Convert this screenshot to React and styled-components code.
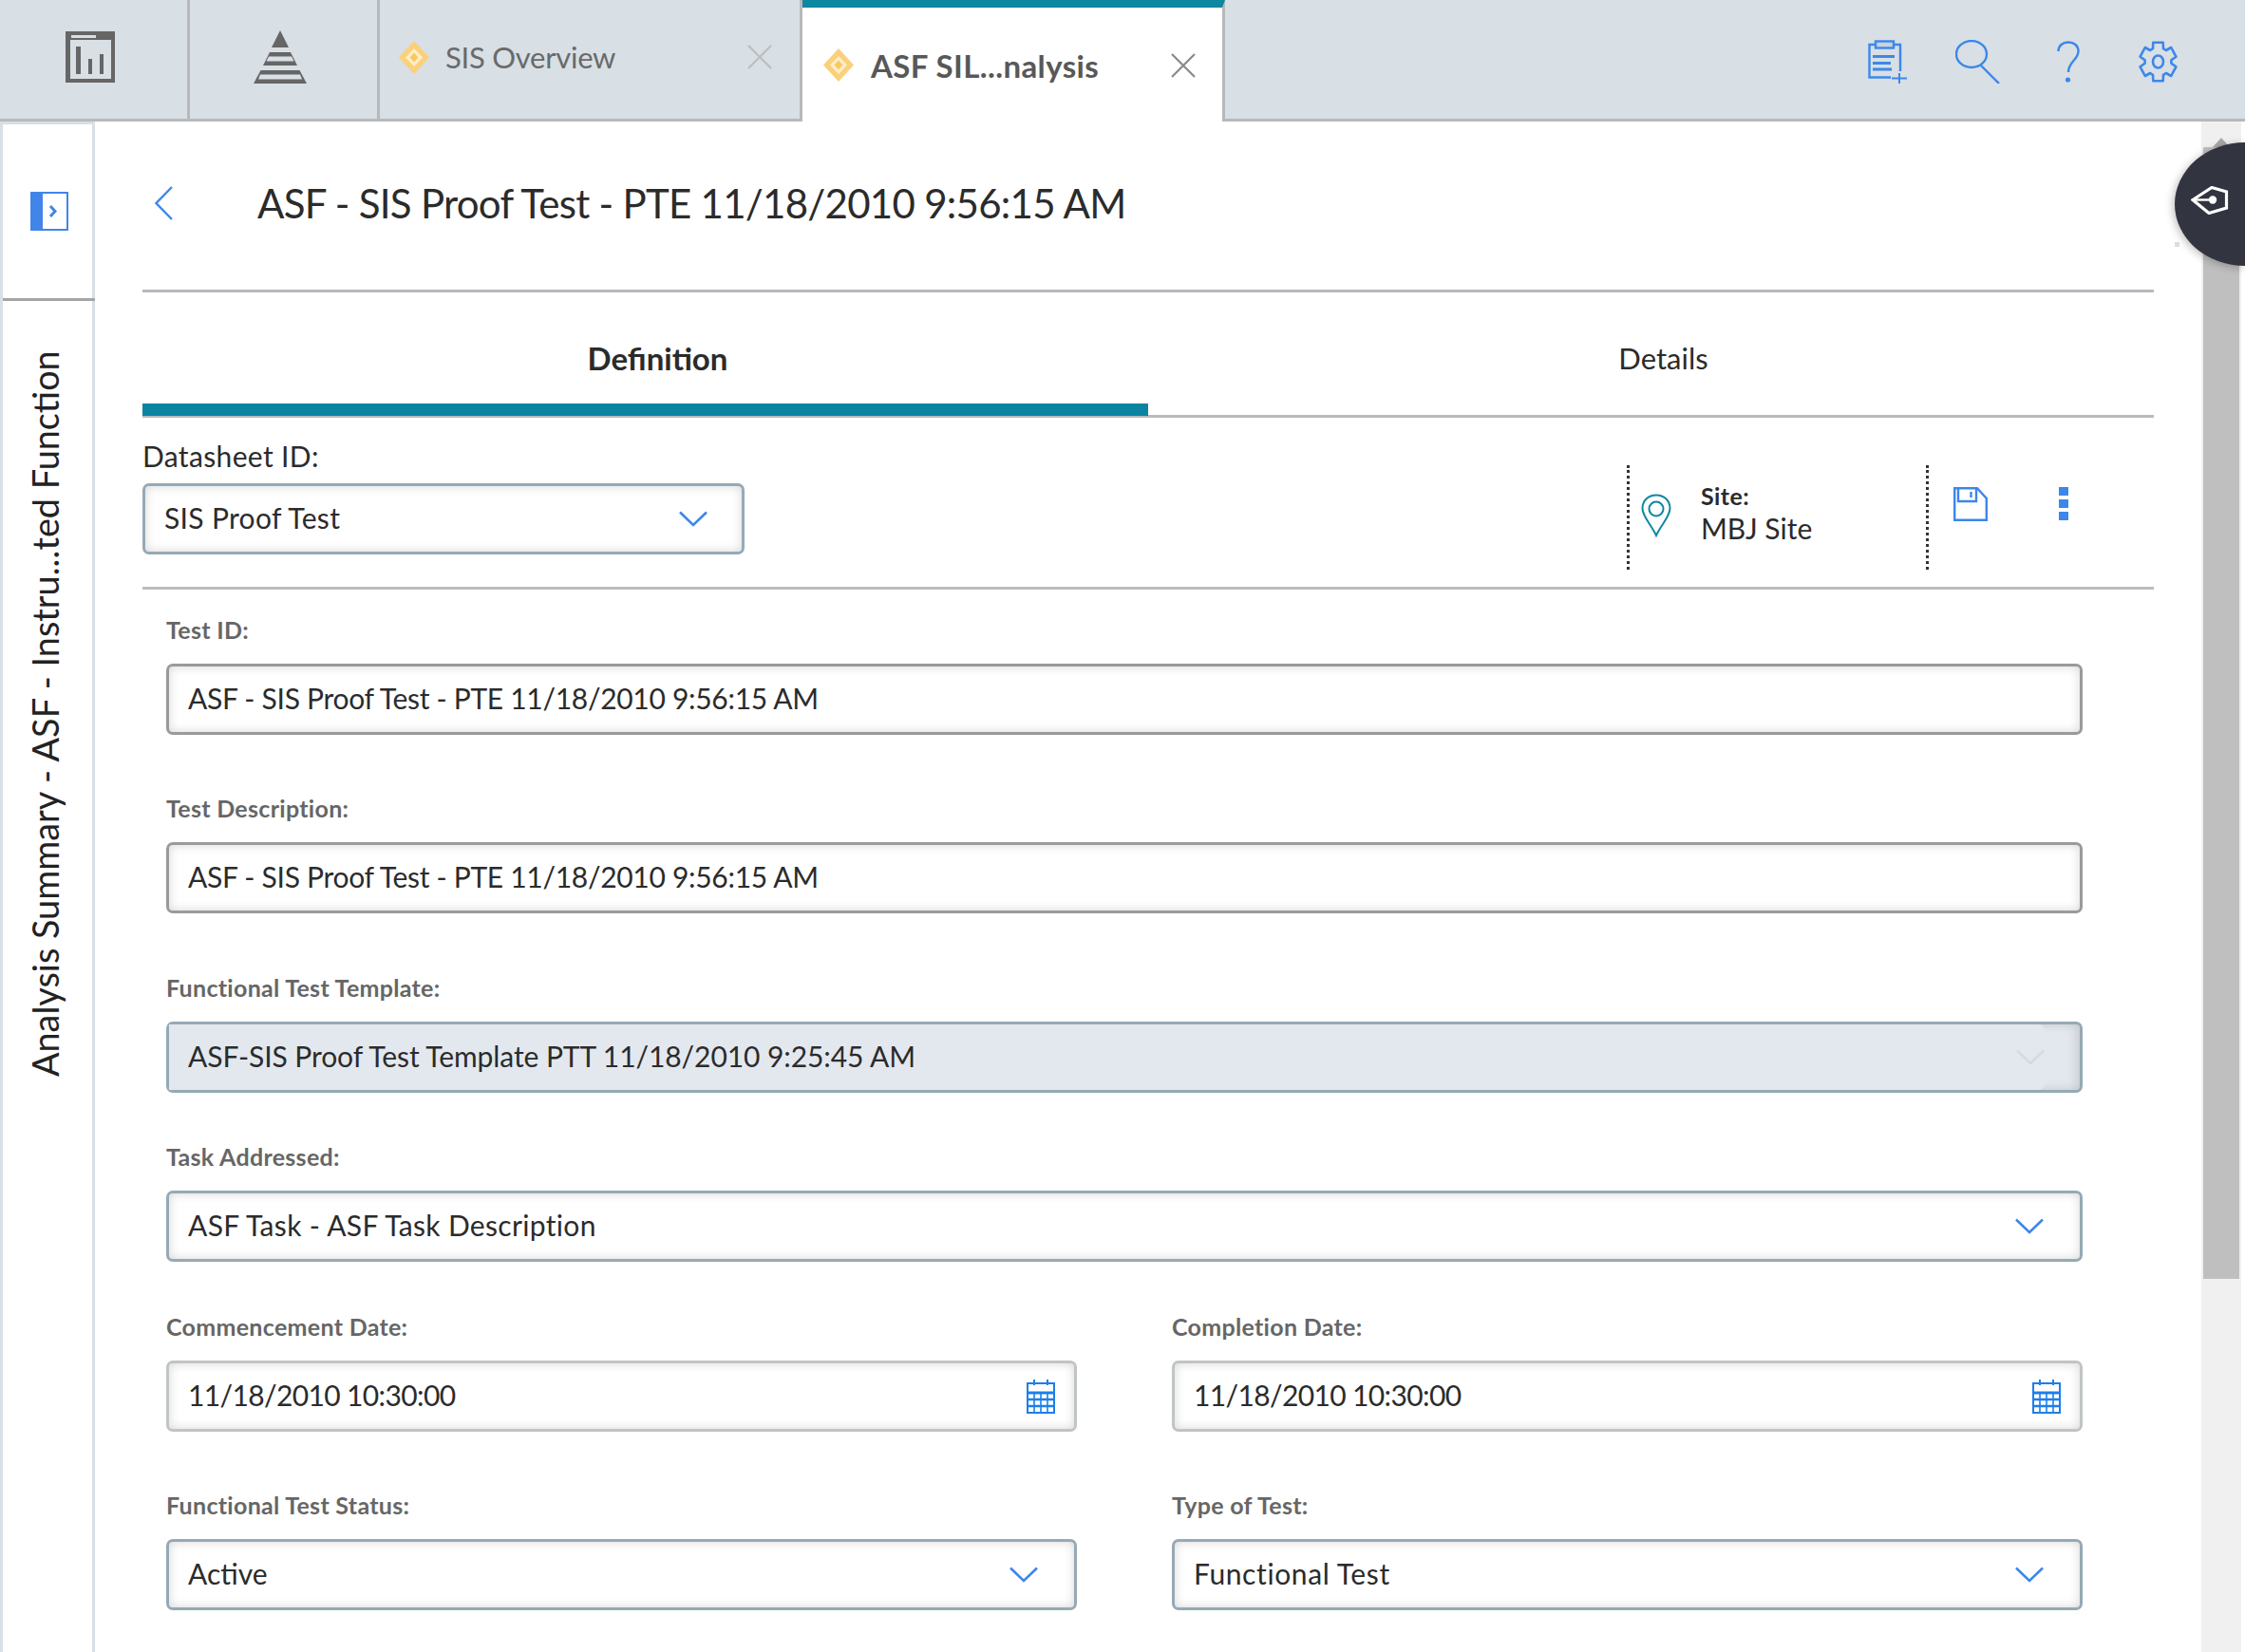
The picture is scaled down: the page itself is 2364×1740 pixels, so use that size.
import React from "react";
import styled, { createGlobalStyle } from "styled-components";

const Global = createGlobalStyle`
  html, body { margin: 0; padding: 0; background: #fff; }
  * { box-sizing: border-box; }
  body { font-family: Lato, "Liberation Sans", sans-serif; color: #2b2b2b; }
`;

const BLUE = "#3d87ea";
const TEAL = "#0e87a0";

const Page = styled.div`
  position: relative;
  width: 2364px;
  height: 1740px;
  overflow: hidden;
  display: flex;
  flex-direction: column;
  background: #fff;
`;

const TopBar = styled.header`
  flex: none;
  height: 128px;
  display: flex;
  background: #d8dfe5;
  border-bottom: 3px solid #b8b8bc;
`;

const ModuleTab = styled.div`
  flex: none;
  width: ${(p) => p.$w}px;
  display: flex;
  align-items: center;
  justify-content: center;
  padding: 0 8px 5px 0;
  border-right: 3px solid #b8b8bc;
`;

const DocTab = styled.div`
  flex: none;
  width: ${(p) => p.$w}px;
  display: flex;
  align-items: center;
  height: ${(p) => (p.$active ? "128px" : "125px")};
  padding: ${(p) => (p.$active ? "1px 0 0 21px" : "0 0 5px 19px")};
  background: ${(p) => (p.$active ? "#fff" : "transparent")};
  border-right: 3px solid #b8b8bc;
  border-top: ${(p) => (p.$active ? `8px solid ${TEAL}` : "none")};
`;

const TabTitle = styled.span`
  margin-left: ${(p) => (p.$active ? "17px" : "16px")};
  width: ${(p) => (p.$active ? "316px" : "318px")};
  font-size: ${(p) => (p.$active ? "33px" : "31px")};
  letter-spacing: ${(p) => (p.$active ? "0.4px" : "-0.25px")};
  font-weight: ${(p) => (p.$active ? 700 : 400)};
  color: ${(p) => (p.$active ? "#585858" : "#6a6a6a")};
  white-space: nowrap;
`;

const ToolGroup = styled.div`
  margin-left: auto;
  display: flex;
  align-items: center;
  padding: 0 44px 0 0;
`;

const ToolCell = styled.div`
  width: 95px;
  display: flex;
  justify-content: center;
  padding-top: 4px;
`;

const Body = styled.div`
  flex: 1;
  min-height: 0;
  display: flex;
`;

const Sidebar = styled.aside`
  flex: none;
  width: 100px;
  display: flex;
  flex-direction: column;
  border-left: 3px solid #d8dfe5;
  border-right: 3px solid #d8dfe5;
  border-top: 3px solid #d8dfe5;
`;

const SideHead = styled.div`
  flex: none;
  height: 186px;
  padding: 71px 0 0 29px;
  margin-right: -3px;
  border-bottom: 3px solid #a5a5a8;
`;

const SideTitle = styled.div`
  margin: 52px 0 0 23px;
  writing-mode: vertical-rl;
  transform: rotate(180deg);
  font-size: 37.8px;
  line-height: 44px;
  height: 765px;
  white-space: nowrap;
  color: #222;
`;

const Main = styled.main`
  flex: 1;
  min-width: 0;
  padding: 0 50px;
`;

const TitleRow = styled.div`
  height: 180px;
  display: flex;
  align-items: center;
  padding: 0 0 5px 13px;
  border-bottom: 3px solid #b9b9be;
`;

const Title = styled.h1`
  margin: 0 0 0 89px;
  font-size: 42px;
  letter-spacing: -0.73px;
  font-weight: 400;
  color: #2b2b2b;
  white-space: nowrap;
`;

const Tabs = styled.div`
  height: 132px;
  display: flex;
  border-bottom: 3px solid #b9b9be;
`;

const TabItem = styled.div`
  flex: 1;
  display: flex;
  justify-content: center;
  align-items: flex-start;
  padding: 51px 0 0 26px;
  height: 130px;
  font-size: ${(p) => (p.$active ? "33px" : "31px")};
  line-height: 36px;
  font-weight: ${(p) => (p.$active ? 700 : 400)};
  color: #2b2b2b;
  border-bottom: ${(p) => (p.$active ? `13px solid #0b84a2` : "none")};
`;

const SheetBar = styled.div`
  height: 181px;
  display: flex;
  justify-content: space-between;
  border-bottom: 3px solid #bcbcc0;
  padding-top: 24px;
`;

const SheetLeft = styled.div`
  width: 634px;
`;

const SheetLabel = styled.div`
  height: 34px;
  margin-bottom: 11px;
  font-size: 30px;
  letter-spacing: 0.35px;
  line-height: 32px;
  color: #2b2b2b;
`;

const SheetRight = styled.div`
  width: 555px;
  display: flex;
  padding-top: 26px;
  height: 136px;
`;

const SiteCell = styled.div`
  width: 315px;
  height: 110px;
  display: flex;
  border-left: 3px dotted #333;
  padding: 30px 0 0 12px;
`;

const SiteText = styled.div`
  margin: -12px 0 0 31px;
`;

const SiteLabel = styled.div`
  font-size: 25px;
  letter-spacing: 0.4px;
  line-height: 28px;
  font-weight: 700;
  color: #2b2b2b;
`;

const SiteValue = styled.div`
  margin-top: 2px;
  font-size: 30px;
  line-height: 36px;
  color: #2b2b2b;
`;

const ActionCell = styled.div`
  flex: 1;
  height: 110px;
  display: flex;
  border-left: 3px dotted #333;
  padding: 23px 0 0 26px;
`;

const Dots = styled.div`
  margin-left: 75px;
  display: flex;
  flex-direction: column;
  gap: 4px;
`;

const Dot = styled.span`
  display: block;
  width: 10px;
  height: 9px;
  background: ${BLUE};
`;

const Form = styled.div`
  padding: 27px 75px 0 25px;
`;

const Field = styled.div`
  margin-top: ${(p) => p.$top || 0}px;
`;

const FieldLabel = styled.div`
  height: 34px;
  margin-bottom: 17px;
  font-size: 25px;
  letter-spacing: 0.3px;
  line-height: 31px;
  font-weight: 700;
  color: #666;
  white-space: nowrap;
`;

const Control = styled.div`
  height: 75px;
  display: flex;
  align-items: center;
  padding: 0 ${(p) => p.$pr ?? 20}px 0 20px;
  border: 3px solid ${(p) => (p.$kind === "select" ? "#96a9b5" : p.$kind === "date" ? "#c0c4c4" : "#9a9a9a")};
  border-radius: 7px;
  background: #fff;
  box-shadow: inset 0 0 11px rgba(0, 0, 0, 0.16);
  font-size: 30px;
  color: #2b2b2b;
  white-space: nowrap;
`;

const LockedControl = styled.div`
  height: 75px;
  display: flex;
  align-items: stretch;
  border: 3px solid #96a9b5;
  border-radius: 7px;
  background: #e3e8ef;
  box-shadow: inset -3px 0 11px rgba(0, 0, 0, 0.14);
  font-size: 30px;
  color: #2b2b2b;
`;

const LockedInner = styled.div`
  flex: 1;
  display: flex;
  align-items: center;
  justify-content: space-between;
  padding: 0 0 0 20px;
  margin-right: 37px;
  background: #e3e8ef;
  border-radius: 0 7px 7px 0;
`;

const ControlText = styled.span`
  flex: 1;
  padding-bottom: 3px;
  letter-spacing: ${(p) => p.$track || 0}px;
`;

const TwoCols = styled.div`
  display: grid;
  grid-template-columns: 959px 959px;
  column-gap: 100px;
  margin-top: ${(p) => p.$top || 0}px;
`;

const ScrollTrack = styled.div`
  flex: none;
  width: 42px;
  margin-right: 4px;
  padding: 17px 2px 0;
  background: #f0f0f0;
  display: flex;
  flex-direction: column;
  align-items: center;
`;

const ScrollArrow = styled.div`
  width: 0;
  height: 0;
  border-left: 9px solid transparent;
  border-right: 9px solid transparent;
  border-bottom: 10px solid #a8a8a8;
`;

const ScrollThumb = styled.div`
  width: 38px;
  height: 1192px;
  background: #bfbfbf;
`;

const GuideTab = styled.div`
  position: absolute;
  top: 150px;
  right: 0;
  width: 74px;
  height: 130px;
  display: flex;
  align-items: center;
  justify-content: center;
  padding: 0 0 8px 0;
  background: #32343f;
  border-radius: 100% 0 0 100% / 50% 0 0 50%;
  box-shadow: -2px 2px 8px rgba(0, 0, 0, 0.25);
`;

const GuideFleck = styled.span`
  position: absolute;
  top: 255px;
  right: 69px;
  width: 5px;
  height: 5px;
  background: #dcdcdc;
`;

const Chevron = ({ color = BLUE, w = 30 }) => (
  <svg width={w} height="17" viewBox="0 0 30 17" fill="none" style={{ flex: "none" }}>
    <path d="M1 1.5 15 15 29 1.5" stroke={color} strokeWidth="2.6" />
  </svg>
);

const Diamond = () => (
  <svg width="34" height="35" viewBox="0 0 34 35" style={{ flex: "none" }}>
    <path d="M17 0 33 17.5 17 35 1 17.5Z" fill="#fbd07a" />
    <path d="M17 8 26 17.5 17 27 8 17.5Z" fill="#fdeecb" />
    <path d="M17 12.5 21.5 17.5 17 22.5 12.5 17.5Z" fill="#fbc860" />
  </svg>
);

const CloseX = ({ color }) => (
  <svg width="26" height="26" viewBox="0 0 26 26" style={{ flex: "none" }}>
    <path d="M1 1 25 25M25 1 1 25" stroke={color} strokeWidth="2.2" fill="none" />
  </svg>
);

const ChartIcon = () => (
  <svg width="52" height="54" viewBox="0 0 52 54">
    <rect width="52" height="54" fill="#666" />
    <rect x="5" y="9" width="43" height="41" fill="#d8dfe5" />
    <rect x="6" y="4" width="26" height="3" fill="#d8dfe5" />
    <rect x="11" y="16" width="5" height="29" fill="#666" />
    <rect x="24" y="29" width="4" height="16" fill="#666" />
    <rect x="36" y="24" width="4" height="21" fill="#666" />
  </svg>
);

const PyramidIcon = () => (
  <svg width="56" height="56" viewBox="0 0 56 56">
    <path d="M28 0 37 18H19Z" fill="#666" />
    <path d="M17 23H39L46 37H10Z" fill="#666" />
    <path d="M16 27.5H40L42.5 32.5H13.5Z" fill="#d8dfe5" />
    <path d="M7.5 42H48.5L56 56H0Z" fill="#666" />
    <path d="M7 46.5H49L51 51.5H5Z" fill="#d8dfe5" />
  </svg>
);

const ClipboardIcon = () => (
  <svg width="42" height="46" viewBox="0 0 42 46" fill="none" stroke={BLUE} strokeWidth="2.4">
    <path d="M34 33V5H1.5V39.5H24" />
    <rect x="8" y="1.5" width="19" height="7" fill="#c9d3dd" />
    <path d="M5 17.5H28M5 24.5H24M5 31H25" strokeWidth="2.8" />
    <path d="M33 35V46M25 40.5H41" strokeWidth="2" />
  </svg>
);

const SearchIcon = () => (
  <svg width="47" height="46" viewBox="0 0 47 46" fill="none" stroke={BLUE} strokeWidth="2.4">
    <ellipse cx="17" cy="15" rx="16" ry="14" />
    <path d="M27 27 46 46" />
  </svg>
);

const HelpIcon = () => (
  <svg width="24" height="44" viewBox="0 0 24 44" fill="none" stroke={BLUE} strokeWidth="2.4">
    <path d="M1.5 11C1.5 5 6 1.5 12 1.5S22.5 5 22.5 11C22.5 20 12 22 12 33" />
    <circle cx="11.5" cy="41" r="2.6" fill={BLUE} stroke="none" />
  </svg>
);

const gearPath = (() => {
  const cx = 20.5, cy = 22, teeth = 6, rx = 19.5, ry = 21, ix = 14, iy = 15;
  const pts = [];
  for (let i = 0; i < teeth; i++) {
    const a = (i * 2 * Math.PI) / teeth - Math.PI / 2;
    const s = 0.27, m = 0.4;
    [[a - m, ix, iy], [a - s, rx, ry], [a + s, rx, ry], [a + m, ix, iy]].forEach(([t, x, y]) =>
      pts.push(`${(cx + x * Math.cos(t)).toFixed(1)} ${(cy + y * Math.sin(t)).toFixed(1)}`)
    );
  }
  return `M${pts.join("L")}Z`;
})();

const GearIcon = () => (
  <svg width="41" height="44" viewBox="0 0 41 44" fill="none" stroke={BLUE} strokeWidth="2.6" strokeLinejoin="round">
    <path d={gearPath} />
    <ellipse cx="20.5" cy="22" rx="5.5" ry="6.5" />
  </svg>
);

const PanelIcon = () => (
  <svg width="40" height="41" viewBox="0 0 40 41" style={{ display: "block" }}>
    <rect x="1" y="1" width="38" height="39" fill="#fff" stroke="#4285e8" strokeWidth="2" />
    <rect width="13" height="41" fill="#4285e8" />
    <path d="M21 15 26 20.5 21 26" fill="none" stroke="#4285e8" strokeWidth="3" />
  </svg>
);

const BackIcon = () => (
  <svg width="19" height="36" viewBox="0 0 19 36" fill="none" style={{ flex: "none" }}>
    <path d="M18 1 1.5 18 18 35" stroke={BLUE} strokeWidth="2.4" />
  </svg>
);

const PinIcon = () => (
  <svg width="32" height="46" viewBox="0 0 32 46" fill="none" stroke={TEAL} strokeWidth="2" style={{ flex: "none" }}>
    <path d="M16 44C11 33 1.5 24 1.5 15.5 1.5 7 8 1.5 16 1.5S30.5 7 30.5 15.5C30.5 24 21 33 16 44Z" />
    <ellipse cx="16" cy="16" rx="7.5" ry="7.5" />
  </svg>
);

const SaveIcon = () => (
  <svg width="36" height="36" viewBox="0 0 36 36" fill="none" stroke={BLUE} strokeWidth="2.4" style={{ flex: "none" }}>
    <path d="M1.2 1.2H25L34.8 12V34.8H1.2Z" />
    <path d="M5 1.2V15H24V1.2" />
    <path d="M18.5 5V11" />
  </svg>
);

const CalendarIcon = () => (
  <svg width="30" height="36" viewBox="0 0 30 36" fill="none" stroke="#1e7fe8" style={{ flex: "none" }}>
    <path d="M8 0V6M22 0V6" strokeWidth="2" />
    <rect x="1" y="4" width="28" height="31" strokeWidth="2" />
    <path d="M1 14H29" strokeWidth="3" />
    <path d="M1 21H29M1 28H29" strokeWidth="2.4" />
    <path d="M8 14V35M15 14V35M22 14V35" strokeWidth="1.6" />
  </svg>
);

const GuideIcon = () => (
  <svg width="40" height="30" viewBox="0 0 40 30" fill="none" stroke="#fff" strokeWidth="3.2">
    <path d="M2 14.5 22 1.5 37.5 6V23L19 28.5Z" />
    <path d="M2 14.5H22" strokeWidth="2.4" />
    <circle cx="23" cy="14.5" r="4.2" fill="#fff" stroke="none" />
  </svg>
);

const TextField = ({ label, value, top, track }) => (
  <Field $top={top}>
    <FieldLabel>{label}</FieldLabel>
    <Control>
      <ControlText $track={track}>{value}</ControlText>
    </Control>
  </Field>
);

const SelectField = ({ label, value, top, track }) => (
  <Field $top={top}>
    <FieldLabel>{label}</FieldLabel>
    <Control $kind="select" $pr={38}>
      <ControlText $track={track}>{value}</ControlText>
      <Chevron />
    </Control>
  </Field>
);

const DateField = ({ label, value }) => (
  <Field>
    <FieldLabel>{label}</FieldLabel>
    <Control $kind="date" $pr={20}>
      <ControlText $track={-0.63}>{value}</ControlText>
      <CalendarIcon />
    </Control>
  </Field>
);

export default function App() {
  return (
    <Page>
      <Global />
      <TopBar>
        <ModuleTab $w={200}><ChartIcon /></ModuleTab>
        <ModuleTab $w={200}><PyramidIcon /></ModuleTab>
        <DocTab $w={445}>
          <Diamond />
          <TabTitle>SIS Overview</TabTitle>
          <CloseX color="#bdbdbd" />
        </DocTab>
        <DocTab $w={445} $active>
          <Diamond />
          <TabTitle $active>ASF SIL...nalysis</TabTitle>
          <CloseX color="#8a8a8a" />
        </DocTab>
        <ToolGroup>
          <ToolCell><ClipboardIcon /></ToolCell>
          <ToolCell><SearchIcon /></ToolCell>
          <ToolCell><HelpIcon /></ToolCell>
          <ToolCell><GearIcon /></ToolCell>
        </ToolGroup>
      </TopBar>
      <Body>
        <Sidebar>
          <SideHead><PanelIcon /></SideHead>
          <SideTitle>Analysis Summary - ASF - Instru...ted Function</SideTitle>
        </Sidebar>
        <Main>
          <TitleRow>
            <BackIcon />
            <Title>ASF - SIS Proof Test - PTE 11/18/2010 9:56:15 AM</Title>
          </TitleRow>
          <Tabs>
            <TabItem $active>Definition</TabItem>
            <TabItem>Details</TabItem>
          </Tabs>
          <SheetBar>
            <SheetLeft>
              <SheetLabel>Datasheet ID:</SheetLabel>
              <Control $kind="select" $pr={36}>
                <ControlText $track={0.32}>SIS Proof Test</ControlText>
                <Chevron />
              </Control>
            </SheetLeft>
            <SheetRight>
              <SiteCell>
                <PinIcon />
                <SiteText>
                  <SiteLabel>Site:</SiteLabel>
                  <SiteValue>MBJ Site</SiteValue>
                </SiteText>
              </SiteCell>
              <ActionCell>
                <SaveIcon />
                <Dots><Dot /><Dot /><Dot /></Dots>
              </ActionCell>
            </SheetRight>
          </SheetBar>
          <Form>
            <TextField track={-0.3} label="Test ID:" value="ASF - SIS Proof Test - PTE 11/18/2010 9:56:15 AM" />
            <TextField track={-0.3} top={62} label="Test Description:" value="ASF - SIS Proof Test - PTE 11/18/2010 9:56:15 AM" />
            <Field $top={63}>
              <FieldLabel>Functional Test Template:</FieldLabel>
              <LockedControl>
                <LockedInner>
                  <ControlText $track={-0.08}>ASF-SIS Proof Test Template PTT 11/18/2010 9:25:45 AM</ControlText>
                  <Chevron color="#d9d9d9" />
                </LockedInner>
              </LockedControl>
            </Field>
            <SelectField track={0.33} top={52} label="Task Addressed:" value="ASF Task - ASF Task Description" />
            <TwoCols $top={53}>
              <DateField label="Commencement Date:" value="11/18/2010 10:30:00" />
              <DateField label="Completion Date:" value="11/18/2010 10:30:00" />
            </TwoCols>
            <TwoCols $top={62}>
              <SelectField label="Functional Test Status:" value="Active" />
              <SelectField track={0.6} label="Type of Test:" value="Functional Test" />
            </TwoCols>
          </Form>
        </Main>
        <ScrollTrack>
          <ScrollArrow />
          <ScrollThumb />
        </ScrollTrack>
      </Body>
      <GuideTab><GuideIcon /></GuideTab>
      <GuideFleck />
    </Page>
  );
}
